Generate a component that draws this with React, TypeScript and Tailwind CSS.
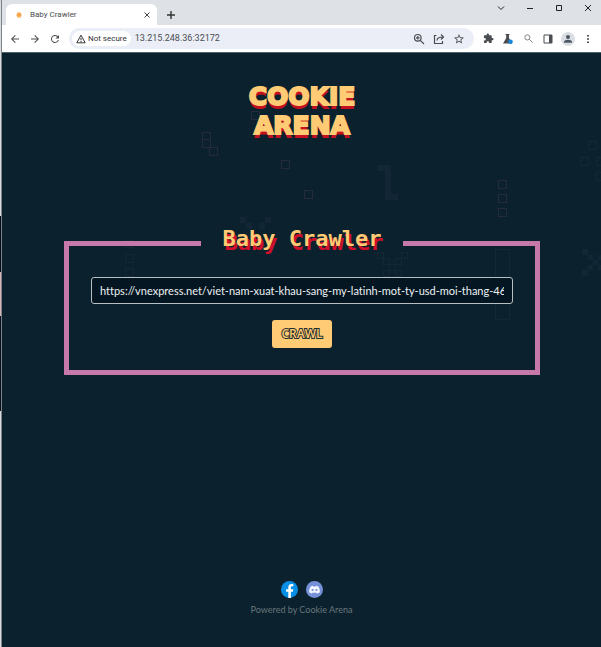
import type { ReactNode } from "react";

const boxes: number[][] = [
  [202, 132, 8, 7], [202, 139, 8, 8], [209, 147, 8, 8],
  [251, 111, 8, 8], [281, 160, 8, 8], [304, 190, 8, 8],
  [498, 180, 8, 8], [498, 194, 8, 8], [498, 208, 8, 8],
];
const faintBoxes: number[][] = [
  [125, 240, 8, 7], [125, 254, 8, 8], [125, 268, 8, 8],
  [588, 141, 8, 8], [580, 157, 8, 8], [596, 157, 8, 8], [596, 172, 8, 8],
  [377, 252, 6, 6], [383, 258, 6, 6], [389, 264, 6, 6], [395, 258, 6, 6], [401, 252, 6, 6],
  [383, 270, 6, 6], [395, 270, 6, 6], [495, 249, 14, 70],
];
const blocks: number[][] = [
  [378, 165, 13, 6], [385, 171, 6, 23], [385, 194, 13, 6],
  [582, 249, 6, 6], [588, 255, 5, 5], [593, 260, 5, 5], [588, 265, 5, 5], [582, 270, 6, 6], [598, 255, 5, 5], [598, 265, 5, 5],
  [240, 217, 6, 6], [246, 223, 6, 6], [259, 223, 6, 6], [265, 217, 6, 6],
];

function Pattern() {
  return (
    <svg aria-hidden="true" className="pointer-events-none absolute inset-0 h-full w-full" viewBox="2 53 599 594" preserveAspectRatio="xMidYMin slice" shapeRendering="crispEdges">
      {boxes.map(([x, y, w, h], i) => <rect key={i} x={x + 0.5} y={y + 0.5} width={w} height={h} fill="none" stroke="#252b3b" />)}
      {faintBoxes.map(([x, y, w, h], i) => <rect key={i} x={x + 0.5} y={y + 0.5} width={w} height={h} fill="none" stroke="#132735" />)}
      {blocks.map(([x, y, w, h], i) => <rect key={i} x={x} y={y} width={w} height={h} fill="#132635" />)}
    </svg>
  );
}

function Icon({ label, children, className = "" }: { label: string; children: ReactNode; className?: string }) {
  return (
    <button type="button" aria-label={label} className={`flex size-5 shrink-0 items-center justify-center ${className}`}>
      {children}
    </button>
  );
}

function Glyph({ d, size = "size-3", viewBox = "0 0 24 24" }: { d: string; size?: string; viewBox?: string }) {
  return <svg viewBox={viewBox} className={size} fill="currentColor"><path d={d} /></svg>;
}

function Browser() {
  return (
    <header className="border-b border-[#52616b] bg-white font-['Roboto',sans-serif] text-[#4a4d51]">
      <div className="flex h-[25px] items-end bg-[#dee1e6] pl-1">
        <div className="flex h-[21px] w-[151px] items-center rounded-t-md bg-white pl-2">
          <svg viewBox="0 0 10 10" className="size-2.5"><circle cx="5" cy="5" r="2.5" fill="#f7a64f" /><path d="M3.5 2.8h3M3 7h4" stroke="#f9c37e" /></svg>
          <span className="flex-1 pl-1.5 text-[8px] leading-4">Baby Crawler</span>
          <Icon label="Close tab"><svg viewBox="0 0 8 8" className="size-2" stroke="#444"><path d="M1.500 1.500l5 5m0-5l-5 5" /></svg></Icon>
        </div>
        <Icon label="New tab" className="ml-1"><svg viewBox="0 0 10 10" className="size-2.5" stroke="#333" strokeWidth="1.4"><path d="M5 1v8M1 5h8" /></svg></Icon>
        <div className="ml-auto flex h-full items-start gap-[9px] pr-[3px] text-[#222]">
          <Icon label="Search tabs" className="-mt-[2px]"><svg viewBox="0 0 8 8" className="size-2" fill="none" stroke="currentColor"><path d="M1 2.5l3 3 3-3" /></svg></Icon>
          <Icon label="Minimize" className="-mt-[2px]"><svg viewBox="0 0 8 8" className="size-2" fill="none" stroke="currentColor"><path d="M1 4.5h6" /></svg></Icon>
          <Icon label="Maximize" className="-mt-[2px]"><svg viewBox="0 0 8 8" className="size-2" fill="none" stroke="currentColor"><path d="M1.5 1.5h5v5h-5z" /></svg></Icon>
          <Icon label="Close" className="-mt-[2px]"><svg viewBox="0 0 8 8" className="size-2" fill="none" stroke="currentColor"><path d="M1 1l6 6m0-6L1 7" /></svg></Icon>
        </div>
      </div>
      <div className="flex h-[27px] items-center pr-[3px] pl-[3px]">
        <Icon label="Back"><Glyph d="M20 11H7.8l5.6-5.6L12 4l-8 8 8 8 1.4-1.4L7.8 13H20z" /></Icon>
        <Icon label="Forward"><Glyph d="M12 4l-1.4 1.4 5.6 5.6H4v2h12.2l-5.6 5.6L12 20l8-8z" /></Icon>
        <Icon label="Reload"><Glyph d="M17.65 6.35A8 8 0 1 0 19.73 14h-2.08A6 6 0 1 1 12 6c1.66 0 3.14.69 4.22 1.78L13 11h7V4z" /></Icon>
        <div className="ml-1 flex h-[21px] min-w-0 flex-1 items-center rounded-full bg-[#ebeef6] pr-[5px] pl-[3px]">
          <button type="button" className="flex h-[15px] items-center gap-[2px] rounded-full bg-white px-1 text-[8px] whitespace-nowrap text-[#333]">
            <svg viewBox="0 0 10 10" className="size-2.5" fill="none" stroke="#333"><path d="M5 1.200L9.200 8.800H.8zM5 4v2.300M5 7v1" /></svg>
            Not secure
          </button>
          <input aria-label="Address" readOnly value="13.215.248.36:32172" className="ml-1 min-w-0 flex-1 text-[9px] text-[#4a4d51] outline-none" />
          <Icon label="Zoom"><svg viewBox="0 0 12 12" className="size-3" fill="none" stroke="currentColor" strokeWidth="1.200"><circle cx="4.800" cy="4.800" r="3.300" /><path d="M7.300 7.300l3.700 3.700M3 4.800h3.600M4.800 3v3.600" /></svg></Icon>
          <Icon label="Share"><svg viewBox="0 0 12 12" className="size-3" fill="none" stroke="currentColor" strokeWidth="1.200"><path d="M3.500 2.500H1.500v8h8V8M4 7.500c0-2.500 1.500-3.500 6-3.500M8 1.500L10.500 4 8 6.500" /></svg></Icon>
          <Icon label="Bookmark"><Glyph d="M22 9.240l-7.190-.620L12 2 9.190 8.630 2 9.240l5.460 4.730L5.820 21 12 17.270 18.180 21l-1.630-7.030zM12 15.400l-3.760 2.270 1-4.280-3.320-2.880 4.380-.380L12 6.100l1.710 4.040 4.380.380-3.320 2.880 1 4.280z" /></Icon>
        </div>
        <div className="ml-1 flex">
          <Icon label="Extensions"><Glyph size="size-[11px]" d="M20.500 11H19V7a2 2 0 0 0-2-2h-4V3.500a2.500 2.500 0 0 0-5 0V5H4a2 2 0 0 0-2 2v3.800h1.500a2.700 2.700 0 0 1 0 5.400H2V20a2 2 0 0 0 2 2h3.800v-1.500a2.700 2.700 0 0 1 5.400 0V22H17a2 2 0 0 0 2-2v-4h1.500a2.500 2.500 0 0 0 0-5z" /></Icon>
          <Icon label="Labs"><svg viewBox="0 0 12 12" className="size-3"><path d="M3.500 1h4v1H7v3l3 5.500H1L4.200 5V2h-.7z" fill="#4a4d51" /><circle cx="8.500" cy="8.800" r="2.300" fill="#1687d9" /></svg></Icon>
          <Icon label="Search"><svg viewBox="0 0 12 12" className="size-[11px]" fill="none" stroke="#777a7e"><circle cx="4.800" cy="4.800" r="2.800" /><path d="M7 7l3.500 3.500" /></svg></Icon>
          <Icon label="Side panel"><svg viewBox="0 0 10 10" className="size-2.5"><path d="M1 1h8v8H1z" fill="none" stroke="currentColor" /><path d="M6 1h3v8H6z" fill="currentColor" /></svg></Icon>
          <Icon label="Profile"><svg viewBox="0 0 14 14" className="size-3.5"><circle cx="7" cy="7" r="7" fill="#dadde3" /><circle cx="7" cy="5" r="2" fill="#4d5763" /><path d="M3 10.800V10c0-3 8-3 8 0v.8z" fill="#4d5763" /></svg></Icon>
          <Icon label="Menu"><svg viewBox="0 0 10 10" className="size-2.5" fill="currentColor"><path d="M4 1h2v1.500H4zM4 4.200h2v1.500H4zM4 7.500h2V9H4z" /></svg></Icon>
        </div>
      </div>
    </header>
  );
}

export default function App() {
  return (
    <div className="flex min-h-screen bg-[#0b222e] font-['Lato','Open_Sans',sans-serif]">
      <div aria-hidden="true" className="flex w-[2px] shrink-0 flex-col border-r border-[#7b8488]">
        <div className="h-[216px] bg-[#d9dbdd]" />
        <div className="h-[56px] bg-[#070a18]" />
        <div className="h-[44px] bg-[#d9b4b8]" />
        <div className="h-[95px] bg-[#0b0e1c]" />
        <div className="flex-1 bg-[#d9dbdd]" />
      </div>
      <div className="flex min-w-0 flex-1 flex-col">
        <Browser />
        <div className="relative flex flex-1 flex-col">
          <Pattern />
          <main className="relative flex-1 pt-[29px] pr-[61px] pl-[62px]">
            <h1 aria-label="Cookie Arena" className="text-center font-['DejaVu_Sans',sans-serif] text-[25px] leading-[29px] font-bold text-[#ffcb74] [-webkit-text-stroke:2px_#ffcb74] [text-shadow:0_4px_0_#c5101f]">
              COOKIE<br />ARENA
            </h1>
            <form onSubmit={(e) => e.preventDefault()} className="mt-[87px]">
              <fieldset className="min-w-0 border-[5px] border-[#c678aa] px-[22px] pb-[22px]">
                <legend className="mx-auto px-[22px] pb-2 font-['DejaVu_Sans_Mono',monospace] text-[22px] leading-6 font-bold text-[#ffcb74] [text-shadow:2px_4px_0_#d0102a]">
                  Baby Crawler
                </legend>
                <input aria-label="URL to crawl" defaultValue="https://vnexpress.net/viet-nam-xuat-khau-sang-my-latinh-mot-ty-usd-moi-thang-4634821.html" className="mt-[18px] block h-[27px] w-full rounded-[3px] border border-[#b5bfc4] bg-[#031622] px-2 text-[11px] text-[#eef2f4] outline-none [font-variant-ligatures:none]" />
                <button type="submit" className="mx-auto mt-4 block h-7 rounded-[3px] bg-[#ffcb74] px-[9px] font-['Open_Sans',sans-serif] text-xs font-semibold text-[#ffcb74] [-webkit-text-stroke:2px_#1f2e30] [paint-order:stroke_fill]">
                  CRAWL
                </button>
              </fieldset>
            </form>
          </main>
          <footer className="relative pb-[29px] text-center">
            <div className="flex justify-center gap-2">
              <a href="#facebook" aria-label="Facebook">
                <svg viewBox="0 0 17 17" className="size-[17px]"><circle cx="8.500" cy="8.500" r="8.500" fill="#078ee5" /><path d="M7.300 17v-6.200H5.100V8.300h2.200V6.400c0-2.200 1.300-3.400 3.300-3.400.9 0 1.800.2 1.800.2v2.100h-1.100c-1 0-1.400.6-1.400 1.300v1.700h2.400l-.4 2.500h-2V17z" fill="#fff" /></svg>
              </a>
              <a href="#discord" aria-label="Discord">
                <svg viewBox="0 0 17 17" className="size-[17px]"><circle cx="8.500" cy="8.500" r="8.500" fill="#7691d8" /><path d="M6.900 4.800C5.700 5 4.900 5.400 4.500 5.700 3.400 7.500 3 9.600 3.200 11.200c1 .8 2 1.200 2.900 1.300l.7-1.100c1.100.3 2.300.3 3.400 0l.7 1.100c.9-.1 1.900-.5 2.900-1.300.2-1.600-.2-3.700-1.300-5.500-.4-.3-1.200-.7-2.400-.9l-.4.7H7.300z" fill="#f1f5ff" /><circle cx="6.600" cy="9" r="1.100" fill="#7691d8" /><circle cx="10.400" cy="9" r="1.100" fill="#7691d8" /></svg>
              </a>
            </div>
            <p className="mt-1 text-[9px] leading-4 text-[#68757b]">Powered by Cookie Arena</p>
          </footer>
        </div>
      </div>
    </div>
  );
}
